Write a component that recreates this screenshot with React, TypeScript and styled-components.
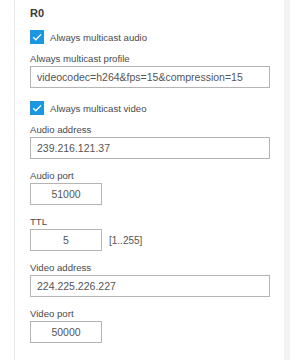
import * as React from 'react';
import styled, { createGlobalStyle } from 'styled-components';

const GlobalStyle = createGlobalStyle`
  html, body {
    margin: 0;
    padding: 0;
    background: #ffffff;
  }
  body {
    font-family: "Liberation Sans", Arial, sans-serif;
    font-size: 9.6px;
    color: #4a4a4a;
  }
`;

function Check({ label }: { label: string }): React.ReactElement {
  return (
    <StyledCheckRow>
      <StyledBox>
        <svg width="12" height="12" viewBox="0 0 12 12">
          <path d="M2.2 6.3 L4.8 8.8 L10 3.4" fill="none" stroke="#ffffff" strokeWidth="1.3" />
        </svg>
      </StyledBox>
      <span>{label}</span>
    </StyledCheckRow>
  );
}

function Field({
  label,
  value,
  short,
  hint,
}: {
  label: string;
  value: string;
  short?: boolean;
  hint?: string;
}): React.ReactElement {
  return (
    <StyledField>
      <StyledLabel>{label}</StyledLabel>
      <StyledInputRow>
        <StyledInput $short={short}>{value}</StyledInput>
        {hint && <StyledHint>{hint}</StyledHint>}
      </StyledInputRow>
    </StyledField>
  );
}

function App(): React.ReactElement {
  return (
    <>
      <GlobalStyle />
      <StyledPanel>
        <StyledTitle>R0</StyledTitle>
        <Check label="Always multicast audio" />
        <Field label="Always multicast profile" value="videocodec=h264&fps=15&compression=15" />
        <Check label="Always multicast video" />
        <Field label="Audio address" value="239.216.121.37" />
        <Field label="Audio port" value="51000" short />
        <Field label="TTL" value="5" short hint="[1..255]" />
        <Field label="Video address" value="224.225.226.227" />
        <Field label="Video port" value="50000" short />
      </StyledPanel>
    </>
  );
}

const StyledPanel = styled.div`
  margin-left: 14px;
  width: 276px;
  height: 360px;
  box-sizing: border-box;
  border-left: 1px solid #e8e8e8;
  border-right: 6px solid #f2f2f2;
  padding: 6px 0 0 15px;
  display: flex;
  flex-direction: column;
`;

const StyledTitle = styled.div`
  font-size: 11px;
  font-weight: 600;
  color: #3a3a3a;
  height: 14px;
  line-height: 14px;
`;

const StyledField = styled.div`
  display: flex;
  flex-direction: column;
  margin-top: 11px;
`;

const StyledCheckRow = styled.label`
  display: flex;
  align-items: center;
  gap: 6px;
  height: 14px;
  margin-top: 10px;
  font-size: 9.6px;

  ${StyledField} + & {
    margin-top: 13px;
  }

  & + ${StyledField} {
    margin-top: 9px;
  }
`;

const StyledBox = styled.span`
  width: 14px;
  height: 14px;
  background: #1b97df;
  display: flex;
  align-items: center;
  justify-content: center;
`;

const StyledLabel = styled.div`
  height: 12px;
  line-height: 12px;
  margin-bottom: 1px;
`;

const StyledInputRow = styled.div`
  display: flex;
  align-items: center;
  gap: 7px;
`;

const StyledInput = styled.div<{ $short?: boolean }>`
  box-sizing: border-box;
  width: ${({ $short }) => ($short ? '72px' : '240px')};
  height: 22px;
  line-height: 20px;
  border: 1px solid #b4b4b4;
  padding: 0 6px;
  font-size: 10.5px;
  color: #555555;
  white-space: nowrap;
  overflow: hidden;
  text-align: ${({ $short }) => ($short ? 'center' : 'left')};
`;

const StyledHint = styled.span`
  color: #555555;
  font-size: 10px;
`;

export default App;
